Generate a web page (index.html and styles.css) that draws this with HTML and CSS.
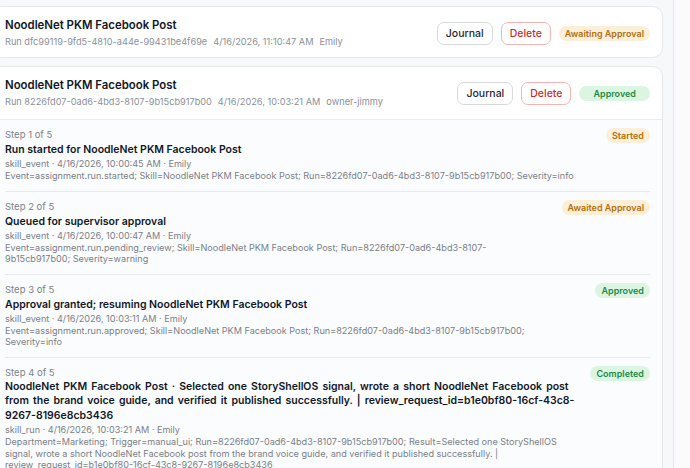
FILE: index.html
```html
<!DOCTYPE html>
<html lang="en">
<head>
<meta charset="utf-8">
<title>Runs</title>
<link rel="stylesheet" href="styles.css">
</head>
<body>
<div class="layout">
  <main class="main">
    <section class="card">
      <div class="card-head">
        <div class="head-text">
          <div class="run-title">NoodleNet PKM Facebook Post</div>
          <div class="run-meta"><span>Run dfc99119-9fd5-4810-a44e-99431be4f69e</span><span>4/16/2026, 11:10:47 AM</span><span>Emily</span></div>
        </div>
        <div class="actions">
          <button class="btn">Journal</button>
          <button class="btn btn-danger">Delete</button>
          <span class="badge badge-amber">Awaiting Approval</span>
        </div>
      </div>
    </section>

    <section class="card">
      <div class="card-head card-head-split">
        <div class="head-text">
          <div class="run-title">NoodleNet PKM Facebook Post</div>
          <div class="run-meta"><span>Run 8226fd07-0ad6-4bd3-8107-9b15cb917b00</span><span>4/16/2026, 10:03:21 AM</span><span>owner-jimmy</span></div>
        </div>
        <div class="actions">
          <button class="btn">Journal</button>
          <button class="btn btn-danger">Delete</button>
          <span class="badge badge-green badge-wide">Approved</span>
        </div>
      </div>
      <div class="steps">
        <div class="step">
          <div class="step-body">
            <div class="step-label">Step 1 of 5</div>
            <div class="step-title">Run started for NoodleNet PKM Facebook Post</div>
            <div class="step-meta">skill_event · 4/16/2026, 10:00:45 AM · Emily</div>
            <div class="step-detail">Event=assignment.run.started; Skill=NoodleNet PKM Facebook Post; Run=8226fd07-0ad6-4bd3-8107-9b15cb917b00; Severity=info</div>
          </div>
          <span class="badge badge-amber">Started</span>
        </div>
        <div class="step">
          <div class="step-body">
            <div class="step-label">Step 2 of 5</div>
            <div class="step-title">Queued for supervisor approval</div>
            <div class="step-meta">skill_event · 4/16/2026, 10:00:47 AM · Emily</div>
            <div class="step-detail">Event=assignment.run.pending_review; Skill=NoodleNet PKM Facebook Post; Run=8226fd07-0ad6-4bd3-8107-9b15cb917b00; Severity=warning</div>
          </div>
          <span class="badge badge-amber">Awaited Approval</span>
        </div>
        <div class="step">
          <div class="step-body">
            <div class="step-label">Step 3 of 5</div>
            <div class="step-title">Approval granted; resuming NoodleNet PKM Facebook Post</div>
            <div class="step-meta">skill_event · 4/16/2026, 10:03:11 AM · Emily</div>
            <div class="step-detail">Event=assignment.run.approved; Skill=NoodleNet PKM Facebook Post; Run=8226fd07-0ad6-4bd3-8107-9b15cb917b00; Severity=info</div>
          </div>
          <span class="badge badge-green">Approved</span>
        </div>
        <div class="step">
          <div class="step-body">
            <div class="step-label">Step 4 of 5</div>
            <div class="step-title step-title-long">NoodleNet PKM Facebook Post · Selected one StoryShellOS signal, wrote a short NoodleNet Facebook post from the brand voice guide, and verified it published successfully. | review_request_id=b1e0bf80-16cf-43c8-9267-8196e8cb3436</div>
            <div class="step-meta">skill_run · 4/16/2026, 10:03:21 AM · Emily</div>
            <div class="step-detail">Department=Marketing; Trigger=manual_ui; Run=8226fd07-0ad6-4bd3-8107-9b15cb917b00; Result=Selected one StoryShellOS signal, wrote a short NoodleNet Facebook post from the brand voice guide, and verified it published successfully. | review_request_id=b1e0bf80-16cf-43c8-9267-8196e8cb3436</div>
          </div>
          <span class="badge badge-green">Completed</span>
        </div>
      </div>
    </section>
  </main>
  <aside class="side"></aside>
</div>
</body>
</html>
```

FILE: styles.css
```css
* { box-sizing: border-box; }

html, body {
  margin: 0;
  height: 100%;
  overflow: hidden;
}

body {
  font-family: Inter, "Noto Sans", sans-serif;
  background: #f7f8fa;
  color: #111827;
}

.layout {
  display: flex;
  height: 100%;
}

.main {
  flex: 1;
  margin-left: -8px;
  padding: 6px 10px 0 0;
  display: flex;
  flex-direction: column;
  gap: 8px;
  min-width: 0;
}

.side {
  width: 17px;
  flex: none;
  border-left: 1px solid #e5e7eb;
  background: #fbfbfc;
}

.card {
  flex: none;
  background: #ffffff;
  border: 1px solid #e5e7eb;
  border-radius: 10px;
  overflow: hidden;
}

.card-head {
  display: flex;
  align-items: center;
  justify-content: space-between;
  padding: 10px 12px 8px;
}

.card-head-split {
  padding-bottom: 10px;
  border-bottom: 1px solid #e9ebef;
}

.run-title {
  font-size: 11.4px;
  line-height: 16px;
  font-weight: 600;
  color: #111827;
}

.run-meta {
  margin-top: 2px;
  font-size: 9.2px;
  line-height: 14px;
  color: #8b9099;
  display: flex;
  gap: 6px;
  white-space: nowrap;
}

.actions {
  display: flex;
  align-items: center;
  gap: 8px;
  flex: none;
}

.btn {
  font-family: inherit;
  font-size: 10.5px;
  font-weight: 500;
  height: 23px;
  padding: 0 8px;
  border-radius: 7px;
  border: 1px solid #d6d9de;
  background: #ffffff;
  color: #1f2937;
}

.btn-danger {
  border-color: #f3b4b4;
  color: #c62f2f;
}

.badge {
  flex: none;
  display: inline-flex;
  align-items: center;
  height: 15px;
  padding: 0 6px;
  border-radius: 999px;
  font-size: 9px;
  font-weight: 600;
  white-space: nowrap;
}

.badge-wide {
  padding: 0 14px;
}

.badge-amber {
  background: #fcefd9;
  color: #b2700f;
}

.badge-green {
  background: #dcf5e3;
  color: #1f8a45;
}

.steps {
  background: #fbfcfd;
  padding: 0 12px;
}

.step {
  display: flex;
  align-items: flex-start;
  gap: 12px;
  padding: 8px 0 9px;
}

.step + .step {
  border-top: 1px solid #e7e9ed;
}

.step-body {
  flex: 1;
  min-width: 0;
}

.step-label {
  font-size: 9.5px;
  line-height: 14px;
  color: #7a7f88;
}

.step-title {
  font-size: 10.5px;
  line-height: 15px;
  font-weight: 600;
  color: #111827;
}

.step-title-long {
  line-height: 14.5px;
  word-spacing: 1.5px;
}

.step-meta {
  margin-top: 1px;
  font-size: 9.1px;
  line-height: 12px;
  color: #7a7f88;
}

.step-detail {
  font-size: 9.1px;
  line-height: 11.5px;
  color: #7a7f88;
}
```
